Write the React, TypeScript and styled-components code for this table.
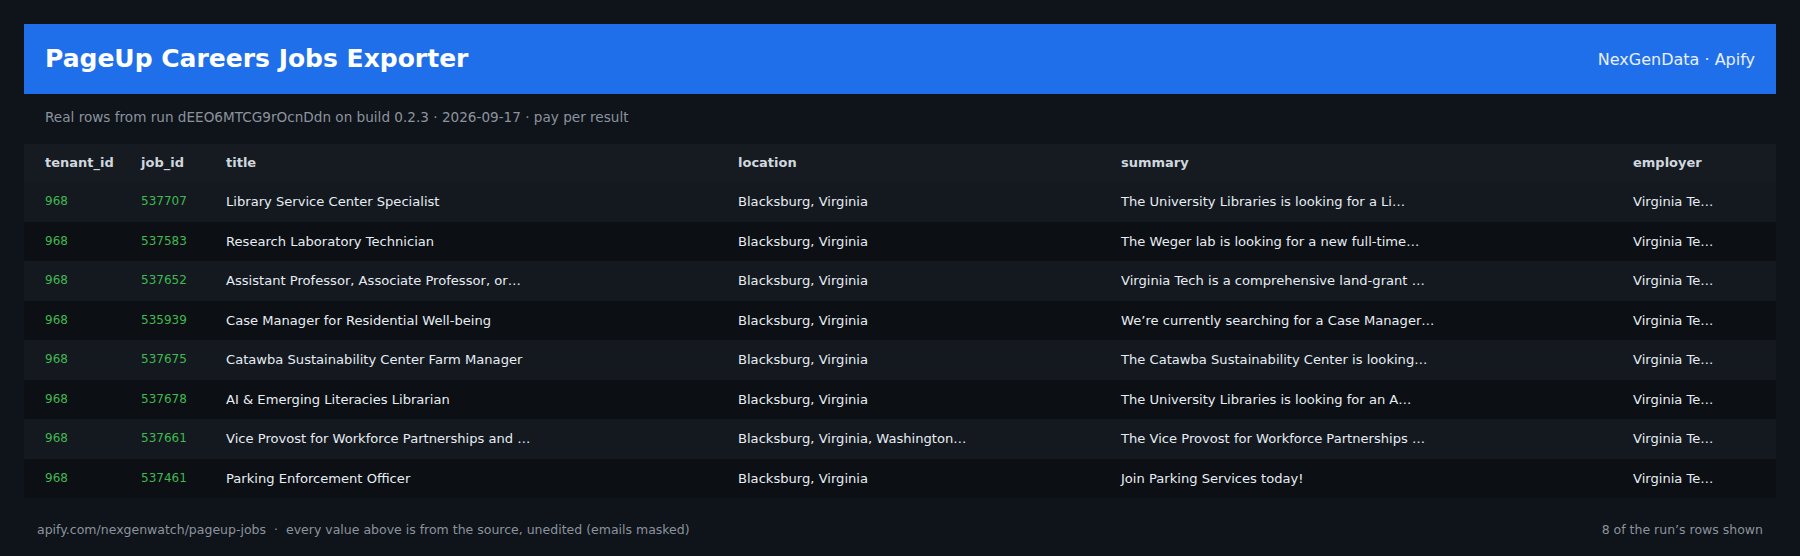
import React from "react";
import styled, { createGlobalStyle } from "styled-components";

const GlobalStyle = createGlobalStyle`
  html, body {
    margin: 0;
    padding: 0;
    background: #0f131a;
    font-family: "DejaVu Sans", "Liberation Sans", sans-serif;
  }
  * { box-sizing: border-box; }
`;

const Page = styled.div`
  width: 1800px;
  height: 556px;
  padding: 24px 24px 0;
  background: #0f131a;
  display: flex;
  flex-direction: column;
`;

const Banner = styled.header`
  height: 70px;
  background: #1f6feb;
  display: flex;
  align-items: center;
  justify-content: space-between;
  padding: 0 21px;
  color: #ffffff;
`;

const Title = styled.h1`
  margin: 0;
  font-size: 25px;
  font-weight: 700;
  line-height: 30px;
`;

const Brand = styled.span`
  font-size: 16px;
  color: #e8f0fd;
`;

const Subtitle = styled.p`
  margin: 0;
  padding: 15px 21px 18px;
  font-size: 13.6px;
  line-height: 17px;
  color: #8b949e;
`;

const Table = styled.table`
  width: 100%;
  border-collapse: collapse;
  table-layout: fixed;
`;

const HeadCell = styled.th`
  text-align: left;
  padding: 11px 0 11px 21px;
  font-size: 13px;
  line-height: 16px;
  font-weight: 700;
  color: #d0d7de;
  background: #161b22;
  white-space: nowrap;
`;

const Row = styled.tr<{ $odd: boolean }>`
  background: ${(p) => (p.$odd ? "#141920" : "#0c0f14")};
`;

const Cell = styled.td<{ $num?: boolean }>`
  padding: 12px 0 12px 21px;
  font-size: ${(p) => (p.$num ? "12px" : "13.1px")};
  line-height: 15.5px;
  color: ${(p) => (p.$num ? "#3fb950" : "#e6edf3")};
  white-space: nowrap;
  overflow: hidden;
`;

const Footer = styled.footer`
  display: flex;
  justify-content: space-between;
  align-items: center;
  padding: 24px 13px 0;
  font-size: 12.5px;
  line-height: 16px;
  color: #8b949e;
`;

const Sep = styled.span`
  margin: 0 8px;
`;

const cols = [96, 85, 512, 383, 512, 164];
const headers = ["tenant_id", "job_id", "title", "location", "summary", "employer"];

const rows: [string, string, string, string, string, string][] = [
  ["968", "537707", "Library Service Center Specialist", "Blacksburg, Virginia", "The University Libraries is looking for a Li…", "Virginia Te…"],
  ["968", "537583", "Research Laboratory Technician", "Blacksburg, Virginia", "The Weger lab is looking for a new full-time…", "Virginia Te…"],
  ["968", "537652", "Assistant Professor, Associate Professor, or…", "Blacksburg, Virginia", "Virginia Tech is a comprehensive land-grant …", "Virginia Te…"],
  ["968", "535939", "Case Manager for Residential Well-being", "Blacksburg, Virginia", "We’re currently searching for a Case Manager…", "Virginia Te…"],
  ["968", "537675", "Catawba Sustainability Center Farm Manager", "Blacksburg, Virginia", "The Catawba Sustainability Center is looking…", "Virginia Te…"],
  ["968", "537678", "AI & Emerging Literacies Librarian", "Blacksburg, Virginia", "The University Libraries is looking for an A…", "Virginia Te…"],
  ["968", "537661", "Vice Provost for Workforce Partnerships and …", "Blacksburg, Virginia, Washington…", "The Vice Provost for Workforce Partnerships …", "Virginia Te…"],
  ["968", "537461", "Parking Enforcement Officer", "Blacksburg, Virginia", "Join Parking Services today!", "Virginia Te…"],
];

export default function App() {
  return (
    <>
      <GlobalStyle />
      <Page>
        <Banner>
          <Title>PageUp Careers Jobs Exporter</Title>
          <Brand>NexGenData · Apify</Brand>
        </Banner>
        <Subtitle>
          Real rows from run dEEO6MTCG9rOcnDdn on build 0.2.3 · 2026-09-17 · pay per result
        </Subtitle>
        <Table>
          <colgroup>
            {cols.map((w, i) => (
              <col key={i} style={{ width: w }} />
            ))}
          </colgroup>
          <thead>
            <tr>
              {headers.map((h) => (
                <HeadCell key={h}>{h}</HeadCell>
              ))}
            </tr>
          </thead>
          <tbody>
            {rows.map((r, i) => (
              <Row key={r[1]} $odd={i % 2 === 0}>
                {r.map((v, j) => (
                  <Cell key={j} $num={j < 2}>
                    {v}
                  </Cell>
                ))}
              </Row>
            ))}
          </tbody>
        </Table>
        <Footer>
          <span>
            apify.com/nexgenwatch/pageup-jobs<Sep>·</Sep>every value above is from the source, unedited (emails masked)
          </span>
          <span>8 of the run’s rows shown</span>
        </Footer>
      </Page>
    </>
  );
}
